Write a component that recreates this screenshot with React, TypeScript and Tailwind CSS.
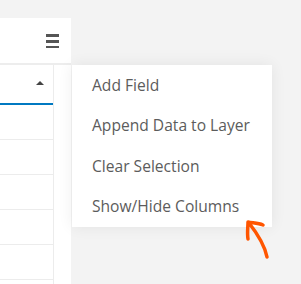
export default function App() {
  const items = ["Add Field", "Append Data to Layer", "Clear Selection", "Show/Hide Columns"];
  return (
    <div
      className="relative h-[284px] w-[301px] overflow-hidden bg-[#f3f3f3] pt-[18px]"
      style={{ fontFamily: "'Open Sans', Lato, sans-serif" }}
    >
      <div className="flex h-full items-start">
        {/* table panel */}
        <div className="flex h-full w-[71px] flex-col bg-white">
          <div className="flex h-[45px] items-center justify-end pr-[12px]">
            <svg width="13" height="14" viewBox="0 0 13 14">
              <rect x="0" y="0" width="13" height="3" fill="#555" />
              <rect x="0" y="6" width="13" height="3" fill="#555" />
              <rect x="0" y="12" width="13" height="3" fill="#555" />
            </svg>
          </div>
          <div className="h-[2px] bg-[#ededed]" />
          <div className="flex flex-1">
            <div className="w-[54px] border-r border-[#ececec]">
              <div className="flex h-[38px] items-center justify-end pr-[9px] pb-[2px]">
                <svg width="8" height="4" viewBox="0 0 8 4">
                  <path d="M0 4 L4 0 L8 4 Z" fill="#444" />
                </svg>
              </div>
              <div className="h-[2px] bg-[#0079c1]" />
              {[0, 1, 2, 3, 4].map((i) => (
                <div key={i} className="h-[35px] border-b border-[#ececec]" />
              ))}
            </div>
          </div>
        </div>

        {/* context menu */}
        <div className="mt-[47px] ml-[1px] w-[200px] bg-white shadow-[0_0_14px_rgba(0,0,0,0.07)]">
          {items.map((t) => (
            <div
              key={t}
              className="flex h-[40.5px] items-center pl-[20px] text-[15.6px] text-[#5c5c5c]"
            >
              {t}
            </div>
          ))}
        </div>
      </div>

      {/* annotation arrow */}
      <svg className="absolute left-[240px] top-[215px]" width="40" height="50" viewBox="0 0 40 50">
        <path
          d="M27 42 C25 32 20 22 9 8 M8 24 C7 18 8 12 8 7 C12 8 18 8 23 10"
          fill="none"
          stroke="#ff5500"
          strokeWidth="3.5"
          strokeLinecap="round"
          strokeLinejoin="round"
        />
      </svg>
    </div>
  );
}
